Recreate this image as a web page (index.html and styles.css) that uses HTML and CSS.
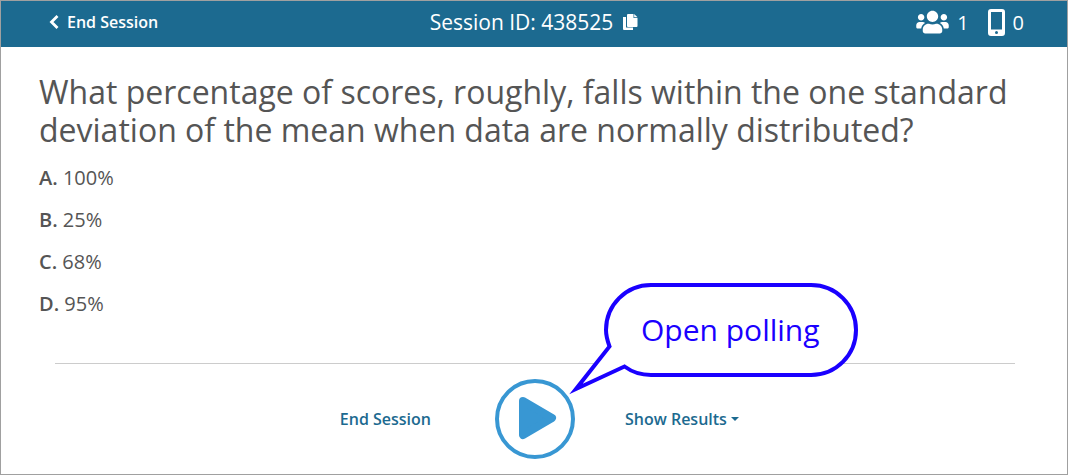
FILE: index.html
```html
<!DOCTYPE html>
<html lang="en">
<head>
    <meta charset="UTF-8">
    <meta name="viewport" content="width=device-width, initial-scale=1.0">
    <title>Polling Session</title>
    <link rel="stylesheet" href="styles.css">
</head>
<body>
    <header class="top-bar">
        <a class="back-link" href="#">
            <svg class="icon-back" viewBox="0 0 10 14" aria-hidden="true">
                <path d="M8.500 1 L2.500 7 L8.500 13" fill="none" stroke="currentColor" stroke-width="2.800"/>
            </svg>
            End Session
        </a>

        <div class="session-id">
            <span>Session ID: 438525</span>
            <button class="copy-btn" type="button" aria-label="Copy session ID">
                <svg class="icon-copy" viewBox="0 0 15 16" aria-hidden="true">
                    <path d="M0 3h3v10.500h7V16H1a1 1 0 0 1-1-1z" fill="currentColor"/>
                    <path d="M5 0h5.500v4h4V12a1 1 0 0 1-1 1H5a1 1 0 0 1-1-1V1a1 1 0 0 1 1-1z" fill="currentColor"/>
                    <path d="M11.200 0l3.300 3.300h-3.300z" fill="currentColor"/>
                </svg>
            </button>
        </div>

        <div class="counts">
            <span class="count">
                <svg class="icon-users" viewBox="0 0 640 512" aria-hidden="true">
                    <path fill="currentColor" d="M96 224c35.300 0 64-28.700 64-64s-28.700-64-64-64-64 28.700-64 64 28.700 64 64 64zm448 0c35.300 0 64-28.700 64-64s-28.700-64-64-64-64 28.700-64 64 28.700 64 64 64zm32 32h-64c-17.600 0-33.500 7.100-45.100 18.600 40.300 22.100 68.900 62 75.100 109.400h66c17.700 0 32-14.300 32-32v-32c0-35.300-28.700-64-64-64zm-256 0c61.900 0 112-50.100 112-112S381.900 32 320 32 208 82.100 208 144s50.100 112 112 112zm76.800 32h-8.300c-20.800 10-43.900 16-68.500 16s-47.600-6-68.500-16h-8.300C179.600 288 128 339.600 128 403.200V432c0 26.500 21.500 48 48 48h288c26.500 0 48-21.500 48-48v-28.800c0-63.600-51.600-115.200-115.200-115.200zm-223.700-13.400C161.500 263.100 145.600 256 128 256H64c-35.300 0-64 28.700-64 64v32c0 17.700 14.300 32 32 32h65.900c6.300-47.400 34.900-87.300 75.200-109.400z"/>
                </svg>
                1
            </span>
            <span class="count">
                <svg class="icon-phone" viewBox="0 0 17 27" aria-hidden="true">
                    <path fill="currentColor" fill-rule="evenodd" d="M3 0h11a3 3 0 0 1 3 3v21a3 3 0 0 1-3 3H3a3 3 0 0 1-3-3V3a3 3 0 0 1 3-3zM3 3v17.500h11V3zM8.500 22a1.500 1.500 0 1 0 0 3a1.500 1.500 0 1 0 0-3z"/>
                </svg>
                0
            </span>
        </div>
    </header>

    <main class="question">
        <h1>What percentage of scores, roughly, falls within the one standard deviation of the mean when data are normally distributed?</h1>
        <ul class="answers">
            <li><b>A.</b> 100%</li>
            <li><b>B.</b> 25%</li>
            <li><b>C.</b> 68%</li>
            <li><b>D.</b> 95%</li>
        </ul>
    </main>

    <footer class="controls">
        <button class="text-btn end-btn" type="button">End Session</button>

        <div class="play-wrap">
            <button class="play-btn" type="button" aria-label="Open polling">
                <svg viewBox="0 0 80 80" aria-hidden="true">
                    <circle cx="40" cy="40" r="38" fill="none" stroke="currentColor" stroke-width="4"/>
                    <path d="M28 22 L57 39 L28 56 Z" fill="currentColor" stroke="currentColor" stroke-width="8" stroke-linejoin="round"/>
                </svg>
            </button>
            <div class="callout">
                <svg class="callout-shape" viewBox="568 280 292 116" aria-hidden="true">
                    <path d="M609.500 346.500 C607.500 341 606 336 606 330 C606 305 626 285 651 285 H811 C836 285 856 305 856 330 C856 355 836 375 811 375 H651 C641 375 632 372 624.500 366.500 L576 389 Z" fill="#fff" stroke="#1a00ff" stroke-width="4" stroke-miterlimit="10"/>
                </svg>
                <span class="callout-text">Open polling</span>
            </div>
        </div>

        <button class="text-btn results-btn" type="button">Show Results <span class="caret"></span></button>
    </footer>
</body>
</html>
```

FILE: styles.css
```css
* {
    box-sizing: border-box;
}

body {
    margin: 0;
    min-height: 100vh;
    display: flex;
    flex-direction: column;
    border: 1px solid #a0a0a0;
    background: #fff;
    color: #555;
    font-family: "Open Sans", sans-serif;
    font-size: 20px;
}

button {
    padding: 0;
    border: none;
    background: none;
    color: inherit;
    font: inherit;
    cursor: pointer;
}

svg {
    display: block;
}

/* Top bar */
.top-bar {
    display: grid;
    grid-template-columns: 1fr auto 1fr;
    align-items: center;
    height: 46px;
    padding: 0 43px 4px;
    background: #1c6a90;
    color: #fff;
}

.back-link {
    display: flex;
    align-items: center;
    gap: 8px;
    padding-left: 5px;
    color: #fff;
    font-size: 16px;
    font-weight: 600;
    text-decoration: none;
}

.icon-back {
    width: 10px;
    height: 14px;
}

.session-id {
    display: flex;
    align-items: center;
    gap: 10px;
    font-size: 21px;
}

.icon-copy {
    width: 15px;
    height: 16px;
}

.counts {
    display: flex;
    justify-content: flex-end;
    gap: 19px;
}

.count {
    display: flex;
    align-items: center;
    gap: 8px;
}

.icon-users {
    width: 33px;
    height: 26px;
}

.icon-phone {
    width: 17px;
    height: 27px;
}

/* Question */
.question {
    flex: 1;
    padding: 26px 38px 0;
}

h1 {
    margin: 0 0 14px;
    font-size: 32px;
    font-weight: 400;
    line-height: 38px;
}

.answers {
    margin: 0;
    padding: 0;
    list-style: none;
}

.answers li {
    margin-bottom: 12px;
    line-height: 30px;
}

.answers b {
    font-weight: 600;
}

/* Bottom controls */
.controls {
    display: grid;
    grid-template-columns: 1fr auto 1fr;
    align-items: center;
    gap: 50px;
    margin: 0 52px 0 54px;
    padding: 15px 0;
    border-top: 1px solid #ccc;
}

.text-btn {
    color: #1c6a90;
    font-size: 16px;
    font-weight: 600;
}

.end-btn {
    justify-self: end;
    padding-right: 14px;
}

.results-btn {
    display: flex;
    align-items: center;
    justify-self: start;
    gap: 4px;
}

.caret {
    border-top: 4px solid;
    border-left: 4px solid transparent;
    border-right: 4px solid transparent;
}

.play-wrap {
    position: relative;
}

.play-btn {
    display: block;
    width: 80px;
    color: #3897d3;
}

/* Speech bubble over the play button */
.callout {
    position: absolute;
    left: 73px;
    bottom: 63px;
    width: 292px;
    pointer-events: none;
}

.callout-text {
    position: absolute;
    top: 28px;
    left: 73px;
    color: #1a00ff;
    font-size: 30px;
    line-height: 44px;
    white-space: nowrap;
}
```
